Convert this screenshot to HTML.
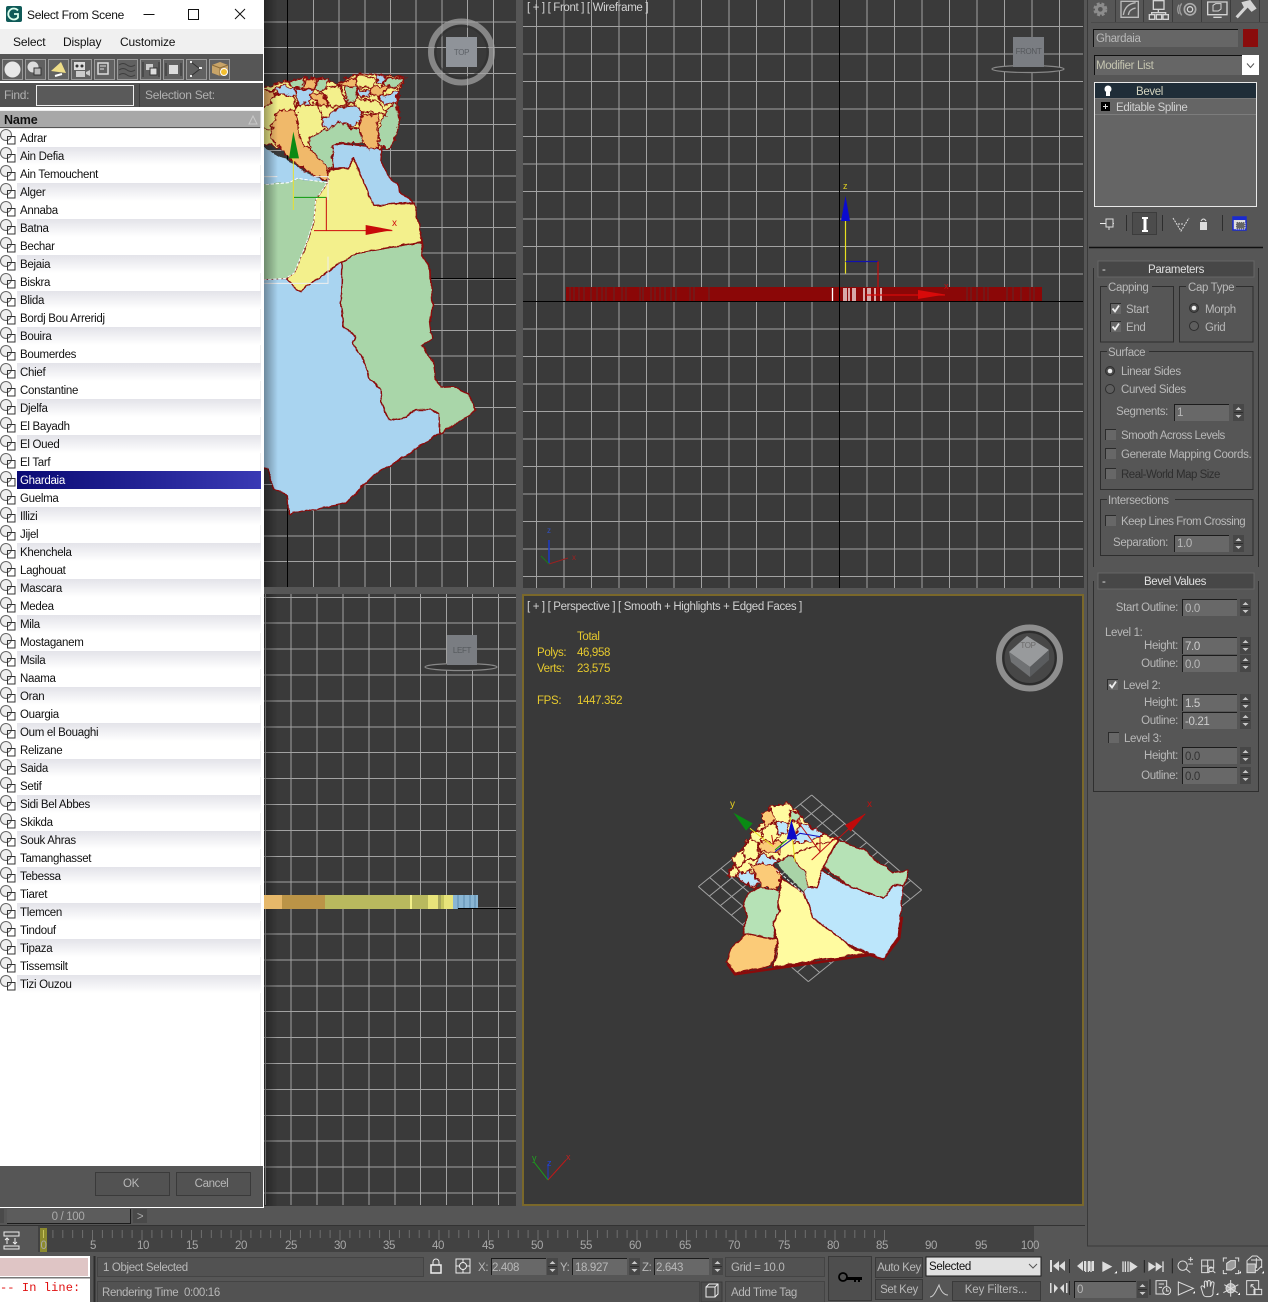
<!DOCTYPE html>
<html lang="en"><head><meta charset="utf-8"><title>Select From Scene</title>
<style>
html,body{margin:0;padding:0;width:1268px;height:1302px;overflow:hidden;background:#565656}
#m{position:absolute;left:0;top:0;font-family:"Liberation Sans",sans-serif;font-size:11.5px;letter-spacing:-.35px}
#m text{fill:#b8b8b8}
#m .d{fill:#d2d2d2}
#m .y{fill:#e6c92e}
#m .k{fill:#111}
#m .w{font-size:12px;letter-spacing:-.15px}
#m .t{font-size:12px;letter-spacing:-.3px}
#m .q{letter-spacing:-.5px}
#m .h{fill:#e0e0e0;text-anchor:middle}
#m .c{text-anchor:middle}
#m .n{fill:#a8a8a8;text-anchor:middle}
#m .e{text-anchor:end}
#m .g{fill:none;stroke:#a2a2a2;stroke-width:1;shape-rendering:crispEdges}
#m .map polygon{stroke:#8b0a0a;stroke-width:4;stroke-linejoin:round}
.b{fill:#a9d4f0}.v{fill:#a9d6a9}.l{fill:#f3f08c}.o{fill:#f0b96a}
#list{position:absolute;left:0;top:129px;width:261px;font:11.5px/20px "Liberation Sans",sans-serif;letter-spacing:-.3px;color:#111}
#list div{height:18px;padding-left:20px;position:relative;white-space:nowrap}
#list div:nth-child(even){background:linear-gradient(#e3e3e9,#fff) 17px 0/244px 18px no-repeat}
#list svg{position:absolute;left:0;top:0;width:17px;height:18px}
#list .s{background:linear-gradient(90deg,#07076f,#3a3ab4)!important;color:#fff}
#list .s svg{background:#fff}
</style></head><body>
<svg id="m" width="1268" height="1302" viewBox="0 0 1268 1302" xmlns="http://www.w3.org/2000/svg">
<defs>
<linearGradient id="shade" x1="0" x2="1" y1="0" y2="0"><stop offset="0" stop-color="#000" stop-opacity=".35"/><stop offset="1" stop-color="#000" stop-opacity="0"/></linearGradient>
<clipPath id="tl"><rect x="264" y="0" width="252" height="587"/></clipPath>
<filter id="j1" x="-5%" y="-5%" width="110%" height="110%"><feTurbulence type="fractalNoise" baseFrequency=".035" numOctaves="3" seed="4"/><feDisplacementMap in="SourceGraphic" scale="12" xChannelSelector="R" yChannelSelector="G"/></filter>
<filter id="j2" x="-8%" y="-8%" width="116%" height="116%"><feTurbulence type="fractalNoise" baseFrequency=".07" numOctaves="3" seed="9"/><feDisplacementMap in="SourceGraphic" scale="20" xChannelSelector="R" yChannelSelector="G"/></filter>
<symbol id="fd" width="56" height="18" overflow="visible"><rect width="55" height="17" fill="#686868"/><path d="M.5 17V.5H55" fill="none" stroke="#1c1c1c"/></symbol>
<symbol id="sp" width="12" height="18" overflow="visible"><rect width="11" height="17" fill="#474747"/><path d="M5.5 3l3 3h-6zM5.5 14l3-3h-6z" fill="#c8c8c8"/><path d="M1 8.5h9" stroke="#2e2e2e"/></symbol>
<symbol id="cb" width="13" height="13" overflow="visible"><rect width="11" height="11" fill="#676767"/><path d="M.5 11V.5H11" fill="none" stroke="#2b2b2b"/></symbol>
<symbol id="cc" width="13" height="13" overflow="visible"><rect width="11" height="11" fill="#676767"/><path d="M.5 11V.5H11" fill="none" stroke="#2b2b2b"/><path d="M2.5 5.5l2.5 3 4-6" fill="none" stroke="#eee" stroke-width="1.8"/></symbol>
<symbol id="ro" width="12" height="12" overflow="visible"><circle cx="5" cy="5" r="4.5" fill="#4a4a4a" stroke="#2e2e2e"/><circle cx="5" cy="5" r="2.3" fill="#eee"/></symbol>
<symbol id="rf" width="12" height="12" overflow="visible"><circle cx="5" cy="5" r="4.5" fill="#5e5e5e" stroke="#2e2e2e"/></symbol>
<symbol id="tb" width="22" height="22" overflow="visible"><rect x=".5" y=".5" width="20" height="20" fill="#616161" stroke="#9a9a9a"/></symbol>
<symbol id="li" width="17" height="18" overflow="visible"><circle cx="6" cy="6" r="5.5" fill="#eee" stroke="#666"/><rect x="7.500" y="7.500" width="7.500" height="7.500" fill="none" stroke="#333"/></symbol>
</defs>

<!-- viewports -->
<rect x="264" y="0" width="252" height="587" fill="#3a3a3a"/>
<rect x="523" y="0" width="561" height="588" fill="#3a3a3a"/>
<rect x="264" y="594" width="252" height="612" fill="#3a3a3a"/>
<rect x="523" y="595" width="560" height="610" fill="#393939" stroke="#7a682a" stroke-width="2"/>

<!-- top-left grid -->
<path class="g" d="M313.4 0v587m25.7-587v587m25.7-587v587m25.7-587v587m25.7-587v587m25.7-587v587m25.7-587v587m25.7-587v587"/>
<path class="g" d="M264 21.9h252m-252 25.7h252m-252 25.7h252m-252 25.7h252m-252 25.7h252m-252 25.7h252m-252 25.7h252m-252 25.7h252m-252 25.7h252m-252 25.7h252m-252 25.7h252m-252 25.7h252m-252 25.7h252m-252 25.7h252m-252 25.7h252m-252 25.7h252m-252 25.7h252m-252 25.7h252m-252 25.7h252m-252 25.7h252m-252 25.7h252m-252 25.7h252"/>
<path d="M287.5 0v587M264 278.5h252" stroke="#000" fill="none"/>

<!-- top-left map -->
<g clip-path="url(#tl)"><g class="map" transform="translate(264 60) scale(.33333)">
<g filter="url(#j1)">
<polygon class="b" points="-30,660 65,655 108,695 235,605 232,735 238,800 272,830 265,850 290,885 320,960 350,985 352,1030 375,1080 425,1070 455,1050 500,1050 527,1062 527,1122 380,1215 330,1245 243,1332 75,1362 72,1305 30,1290 10,1230 -30,1205"/>
<polygon class="v" points="235,605 280,580 475,545 472,580 500,630 505,740 498,790 505,835 475,855 510,915 515,960 535,982 565,980 612,1002 636,1050 527,1122 527,1062 500,1050 455,1050 425,1070 375,1080 352,1030 350,985 320,960 290,885 265,850 272,830 238,800 232,735"/>
<polygon class="b" points="205,250 270,255 330,260 355,270 352,300 370,345 400,370 405,395 450,428 330,435 300,375 268,290 255,325 208,325"/>
<polygon class="l" points="190,330 255,325 268,290 300,375 330,435 450,428 475,545 280,580 235,605 108,695 65,655 90,640 125,555 150,480 155,420 190,370"/>
<polygon class="b" points="-30,240 30,280 70,300 120,335 190,368 100,355 75,368 -30,375" style="stroke:none"/>
<polygon points="-30,375 75,368 100,355 190,368 155,420 150,480 125,555 90,640 65,655 -30,660" fill="#a9d3a7" style="stroke:none"/>
</g>
<g filter="url(#j2)">
<polygon class="l" points="-30,90 50,68 110,55 165,55 220,72 275,42 340,45 425,52 405,90 400,125 408,185 392,240 375,265 345,262 300,250 205,250 205,325 190,330 140,290 50,265 -30,240"/>
<polygon class="o" points="20,210 45,150 95,150 105,215 115,250 140,270 190,320 190,365 130,335 75,295 50,265 25,240"/>
<polygon class="l" points="95,150 100,135 165,130 190,205 135,235 140,270 115,250 105,215"/>
<polygon class="v" points="135,235 190,205 230,185 260,205 285,205 300,250 205,250 205,325 190,320 140,270"/>
<polygon class="b" points="175,180 220,145 270,135 300,155 290,185 260,200 230,185 195,205 180,200"/>
<polygon class="o" points="290,170 345,160 340,205 345,255 318,270 300,250 285,205"/>
<polygon class="v" points="345,205 365,155 395,125 408,185 392,240 375,265 345,255"/>
<polygon class="l" points="-30,135 40,100 90,108 95,150 45,150 20,210 -30,195"/>
<polygon class="o" points="-30,92 30,92 22,132 -30,155"/>
<polygon class="b" points="30,92 50,75 95,85 90,108 40,100"/>
<polygon class="v" points="75,65 125,52 112,85 90,85"/>
<polygon class="o" points="125,58 160,55 150,88 112,85"/>
<polygon class="v" points="165,55 195,60 180,95 150,90"/>
<polygon class="b" points="95,85 150,92 135,130 100,135"/>
<polygon class="o" points="135,105 175,100 200,140 165,135"/>
<polygon class="l" points="175,90 225,75 250,135 205,155 200,140"/>
<polygon class="o" points="225,68 275,55 280,85 235,80"/>
<polygon class="v" points="240,80 275,80 280,125 250,130"/>
<polygon class="l" points="275,45 340,55 325,85 280,80"/>
<polygon class="b" points="280,85 320,95 310,112 280,105"/>
<polygon class="b" points="340,45 365,48 355,72 342,70"/>
<polygon class="v" points="365,55 420,55 400,85 355,80"/>
<polygon class="o" points="325,80 375,78 345,115 318,100"/>
<polygon class="b" points="345,115 405,90 395,125 365,135"/>
<polygon class="l" points="280,115 345,125 370,165 345,160 300,155 270,135"/>
<polygon class="l" points="200,140 250,135 270,135 220,145 175,180 165,135"/>
</g>
<polyline points="-10,375 75,368 100,355 190,368 155,420 150,480 125,555 90,640 65,655 -10,660" fill="none" stroke="#fff" stroke-width="3" stroke-dasharray="10 5"/>
<path d="M-10 350h50M150 350h42v70M192 590v80H-10" fill="none" stroke="#eee" stroke-width="3"/>
<path d="M88 220V450" stroke="#e8e030" stroke-width="3"/>
<path d="M90 412H187" fill="none" stroke="#0a9a0a" stroke-width="3"/>
<path d="M187 412V512" stroke="#c80a0a" stroke-width="3"/>
<path d="M150 512H385" stroke="#d00a0a" stroke-width="3"/>
<path d="M305 495V525L385 510Z" fill="#c80a0a"/>
<path d="M88 215L75 295H105Z" fill="#0a8a14"/>
</g></g>
<rect x="264" y="0" width="14" height="587" fill="url(#shade)"/>
<text x="392" y="226" style="fill:#d01010;font-size:10px">x</text>
<!-- viewcube top -->
<circle cx="461.500" cy="52" r="30.500" fill="none" stroke="#a4a4a4" stroke-width="6" opacity=".72"/>
<circle cx="461.500" cy="52" r="26" fill="none" stroke="#2e2e2e" stroke-width="2" opacity=".55"/>
<rect x="446" y="37" width="31" height="30" fill="#8f9399"/>
<text x="461.500" y="55" class="c" style="fill:#5e6268;font-size:8px">TOP</text>

<!-- front grid -->
<path class="g" d="M536.4 0v588m27.54-588v588m27.54-588v588m27.54-588v588m27.54-588v588m27.54-588v588m27.54-588v588m27.54-588v588m27.54-588v588m27.54-588v588m27.54-588v588m27.54-588v588m27.54-588v588m27.54-588v588m27.54-588v588m27.54-588v588m27.54-588v588m27.54-588v588m27.54-588v588m27.54-588v588"/>
<path class="g" d="M523 26.3h560m-560 27.5h560m-560 27.5h560m-560 27.5h560m-560 27.5h560m-560 27.5h560m-560 27.5h560m-560 27.5h560m-560 27.5h560m-560 27.5h560m-560 27.5h560m-560 27.5h560m-560 27.5h560m-560 27.5h560m-560 27.5h560m-560 27.5h560m-560 27.5h560m-560 27.5h560m-560 27.5h560m-560 27.5h560m-560 27.5h560"/>
<rect x="566" y="287" width="476" height="15" fill="#8b0707"/>
<path d="M570 287v15M574 287v15M579 287v15M584 287v15M591 287v15M597 287v15M602 287v15M606 287v15M614 287v15M622 287v15M626 287v15M640 287v15M643 287v15M651 287v15M655 287v15M660 287v15M665 287v15M671 287v15M676 287v15M690 287v15M694 287v15M709 287v15M967 287v15M971 287v15M977 287v15M984 287v15M988 287v15M1007 287v15M1013 287v15M1021 287v15M1030 287v15M1034 287v15" stroke="#5f2a2a"/>
<path d="M832.500 288v14M844 288v14M846 288v14M849 288v14M853 288v14M855 288v14M864 288v14M868 288v14M870 288v14M875 288v14M881 288v14" stroke="#fff" stroke-width="1.300"/>
<path d="M523 301.500h560M839.500 0v588" stroke="#000" fill="none"/>
<path d="M845.500 220V273.500" stroke="#e8e020" stroke-width="1.200"/>
<path d="M845.500 261.500H878" stroke="#1010b0" stroke-width="1.200"/>
<path d="M878 261.500V295" stroke="#c80a0a" stroke-width="1.200"/>
<path d="M866 295H945" stroke="#d80a0a" stroke-width="1.200"/>
<path d="M918 290V299L945 294.500Z" fill="#d80a0a"/>
<path d="M845.500 196L841 221H850Z" fill="#0a0ad0"/>
<text x="843" y="189" style="fill:#e0d020;font-size:9px">z</text>
<text x="944" y="289" style="fill:#c01010;font-size:9px">x</text>
<text x="527" y="11" class="d">[ + ] [ Front ] [ Wireframe ]</text>
<!-- front cube -->
<ellipse cx="1028" cy="69" rx="36" ry="3.500" fill="#333" stroke="#888" stroke-width="1.200"/>
<rect x="1013" y="37" width="31" height="30" fill="#7a7d82"/>
<text x="1028.500" y="54" class="c" style="fill:#55585c;font-size:8px">FRONT</text>
<!-- front tripod -->
<path d="M549 564V540" stroke="#1a3ac8" stroke-width="1.500"/><path d="M549 564L568 558" stroke="#9a2020"/><path d="M549 564L541 556" stroke="#1a7a1a"/>
<text x="547" y="533" style="fill:#3050c0;font-size:8px">z</text><text x="572" y="560" style="fill:#a02020;font-size:8px">x</text>

<!-- left grid -->
<path class="g" d="M265.300 594v611m25.9-611v611m25.9-611v611m25.9-611v611m25.9-611v611m25.9-611v611m25.9-611v611m25.9-611v611m25.9-611v611m25.9-611v611"/>
<path class="g" d="M264 597.300h252m-252 25.9h252m-252 25.9h252m-252 25.9h252m-252 25.9h252m-252 25.9h252m-252 25.9h252m-252 25.9h252m-252 25.9h252m-252 25.9h252m-252 25.9h252m-252 25.9h252m-252 25.9h252m-252 25.9h252m-252 25.9h252m-252 25.9h252m-252 25.9h252m-252 25.9h252m-252 25.9h252m-252 25.9h252m-252 25.9h252m-252 25.9h252m-252 25.9h252m-252 25.9h252"/>
<rect x="264" y="594" width="14" height="612" fill="url(#shade)"/>
<ellipse cx="461" cy="667" rx="36" ry="3.500" fill="#333" stroke="#888" stroke-width="1.200"/>
<rect x="447" y="635" width="30" height="30" fill="#7a7d82"/>
<text x="462" y="653" class="c" style="fill:#55585c;font-size:8px">LEFT</text>
<rect x="264" y="895" width="18" height="14" fill="#e6b86a"/><rect x="282" y="895" width="43" height="14" fill="#bb9447"/><rect x="325" y="895" width="85" height="14" fill="#b9b95e"/><rect x="410" y="895" width="2" height="14" fill="#f3f08a"/><rect x="412" y="895" width="16" height="14" fill="#b9b95e"/><rect x="428" y="895" width="10" height="14" fill="#e8e47a"/><rect x="438" y="895" width="3" height="14" fill="#a8a85c"/><rect x="441" y="895" width="3" height="14" fill="#c8c860"/><rect x="444" y="895" width="9" height="14" fill="#e8e47a"/><rect x="453" y="895" width="25" height="14" fill="#8ab6d4"/>
<path d="M458 895v14M464 895v14M470 895v14M475 895v14" stroke="#5c8cb0"/>
<path d="M458 908.500h58" stroke="#000"/>

<!-- perspective -->
<text x="527" y="610" class="d">[ + ] [ Perspective ] [ Smooth + Highlights + Edged Faces ]</text>
<text x="577" y="640" class="y">Total</text>
<text x="537" y="656" class="y">Polys:</text><text x="577" y="656" class="y">46,958</text>
<text x="537" y="672" class="y">Verts:</text><text x="577" y="672" class="y">23,575</text>
<text x="537" y="704" class="y">FPS:</text><text x="577" y="704" class="y">1447.352</text>
<circle cx="1029.500" cy="658" r="30.500" fill="none" stroke="#8e8e8e" stroke-width="6"/>
<circle cx="1029.500" cy="658" r="26" fill="#474747" stroke="#2c2c2c" stroke-width="2"/>
<path d="M1027 636L1049 650L1030 667L1009 652Z" fill="#989a9c"/>
<path d="M1009 652L1030 667V677L1011 662Z" fill="#707274"/><path d="M1030 667L1049 650V660L1030 677Z" fill="#5a5c5e"/>
<text x="1028" y="648" class="c" style="fill:#6c6c6c;font-size:8px">TOP</text>
<path d="M548 1180V1164" stroke="#1a3ac8"/><path d="M548 1180L566 1160" stroke="#c01818"/><path d="M548 1180L534 1162" stroke="#18a018"/>
<text x="532" y="1161" style="fill:#20a020;font-size:9px">y</text><text x="547" y="1166" style="fill:#2040e0;font-size:9px">z</text><text x="566" y="1160" style="fill:#c02020;font-size:9px">x</text>

<g class="map" transform="translate(690 790) scale(.33333)">
<path d="M0 0V10M1 0V10M2 0V10M3 0V10M4 0V10M5 0V10M6 0V10M7 0V10M8 0V10M9 0V10M10 0V10M0 0H10M0 1H10M0 2H10M0 3H10M0 4H10M0 5H10M0 6H10M0 7H10M0 8H10M0 9H10M0 10H10" transform="matrix(33 28.5 -34 27.5 365 15)" fill="none" stroke="#a2a2a2" stroke-width="1" vector-effect="non-scaling-stroke"/>
<polyline points="112,522 135,553 540,495 580,508 628,445 636,380" fill="none" stroke="#8b0a0a" stroke-width="7"/>
<g filter="url(#j1)">
<polygon points="110,515 125,475 170,430 265,450 245,525 135,550" fill="#fbcb78"/>
<polygon points="160,430 170,370 160,350 175,310 215,290 270,300 265,350 270,365 250,395 255,445" fill="#b6e2b6"/>
<polygon points="275,265 340,310 375,385 410,400 480,470 530,490 250,530 265,470 250,400 270,360 265,335" fill="#fffba0"/>
<polygon points="340,305 395,235 420,260 480,290 580,325 610,285 640,285 625,440 580,505 540,490 480,465 370,385" fill="#bce6fb"/>
<polygon points="400,230 445,150 520,180 610,250 655,240 645,285 610,285 580,325 480,290" fill="#b6e2b6"/>
<polygon points="300,190 340,160 445,145 400,230 380,290 355,290 345,250" fill="#fffba0"/>
<polygon points="260,220 300,195 345,250 355,290 340,305" fill="#a9d3a7" style="stroke:none"/>
</g>
<g filter="url(#j2)">
<polygon points="110,255 125,235 145,190 185,140 215,100 245,55 295,38 330,80 380,130 445,145 310,190 260,220 180,225 210,280 190,295 150,265" fill="#fffba0"/>
<polygon points="180,225 240,218 275,255 260,300 215,290" fill="#fbcb78"/>
<polygon points="330,100 405,130 360,155 310,160" fill="#bce6fb"/>
<polygon points="210,190 270,210 250,225 200,220" fill="#bce6fb"/>
<polygon points="205,150 275,155 270,190 210,185" fill="#fbcb78"/>
<polygon points="150,250 180,240 210,280 180,290 145,265" fill="#bce6fb"/>
<polygon points="240,50 295,40 325,70 300,100 250,110" fill="#fffba0"/>
<polygon points="300,60 330,75 325,100 300,90" fill="#b6e2b6"/>
<polygon points="215,115 250,100 280,130 245,160 215,150" fill="#fffba0"/>
<polygon points="255,95 295,95 290,135 265,130" fill="#bce6fb"/>
<polygon points="185,125 215,120 215,160 180,165" fill="#fffba0"/>
<polygon points="160,170 180,145 205,160 205,205 165,210" fill="#fffba0"/>
<polygon points="125,205 160,175 165,215 140,240" fill="#fffba0"/>
<polygon points="115,250 135,225 150,245 130,265" fill="#fffba0"/>
<polygon points="215,70 245,55 255,90 225,115" fill="#fbcb78"/>
</g>
<path d="M320 90L390 185M365 210L440 140M390 140L390 185M245 135L250 165" stroke="#c01010" fill="none" stroke-width="3"/>
<path d="M255 185L330 130L390 140" stroke="#1010c0" fill="none" stroke-width="3"/>
<path d="M300 80L315 215M180 115L250 170" stroke="#e8e020" fill="none" stroke-width="3"/>
<path d="M255 180L290 150" stroke="#10a010" fill="none" stroke-width="3"/>
<path d="M445 145L525 72L470 122" stroke="#c01010" fill="none" stroke-width="3"/>
<path d="M528 70L465 105L482 125Z" fill="#c00a0a"/>
<path d="M130 68L168 122L188 100Z" fill="#0a8a14"/>
<path d="M304 90L290 148H322Z" fill="#0a0ac8"/>
<path d="M260 240L345 315" stroke="#eee" stroke-width="3" stroke-dasharray="9 5"/>
</g>
<text x="730" y="807" style="fill:#e6d020;font-size:10px">y</text>
<text x="867" y="807" style="fill:#c01010;font-size:10px">x</text>

<!-- dialog chrome -->
<rect x="0" y="0" width="264" height="1208" fill="#fff"/>
<rect x="0" y="29" width="263" height="25" fill="#f0f0f0"/>
<rect x="0" y="54" width="263" height="27" fill="#565656"/>
<rect x="0" y="83" width="263" height="24" fill="#525252"/>
<rect x="6" y="6" width="16" height="16" rx="2" fill="#0f5a58"/><path d="M18 10.500A5.500 5.500 0 1 0 18 17.500V14H14" fill="none" stroke="#dfe" stroke-width="1.800"/>
<text x="27" y="19" class="k t">Select From Scene</text>
<path d="M143.500 14.500h11M188.500 9.500h10v10h-10zM235 9l10 10M245 9l-10 10" stroke="#111" fill="none"/>
<text x="13" y="46" class="k w">Select</text><text x="63" y="46" class="k w">Display</text><text x="120" y="46" class="k w">Customize</text>

<use href="#tb" x="2" y="59"/><use href="#tb" x="25" y="59"/><use href="#tb" x="48" y="59"/><use href="#tb" x="71" y="59"/><use href="#tb" x="94" y="59"/><use href="#tb" x="117" y="59"/><use href="#tb" x="140" y="59"/><use href="#tb" x="163" y="59"/><use href="#tb" x="186" y="59"/><use href="#tb" x="209" y="59"/>
<circle cx="12.500" cy="69.500" r="8" fill="#e8e8e8"/>
<circle cx="33" cy="67" r="5.500" fill="#ddd"/><rect x="34" y="68" width="7" height="7" fill="#bbb" stroke="#333"/>
<path d="M51 71L61 62L66 73Z" fill="#eedd88"/><path d="M55 76l7-2" stroke="#fff" stroke-width="2"/>
<rect x="74" y="62" width="11" height="8" fill="#ddd"/><circle cx="77" cy="66" r="1.500" fill="#333"/><circle cx="82" cy="66" r="1.500" fill="#333"/><rect x="76" y="71" width="9" height="6" fill="#ccc"/><path d="M86 72l4-2v6l-4-2z" fill="#ccc"/>
<rect x="98" y="63" width="10" height="11" fill="none" stroke="#ddd" stroke-width="1.500"/><path d="M100 66h6M100 69h4" stroke="#ddd"/>
<path d="M119 65q4-3 8 0t8 0M119 70q4-3 8 0t8 0M119 75q4-3 8 0t8 0" fill="none" stroke="#3e3e3e"/>
<rect x="146" y="64" width="7" height="6" fill="#ccc"/><rect x="150" y="68" width="7" height="7" fill="#ddd" stroke="#333"/><path d="M143 62v15M159 62v15" stroke="#333"/>
<rect x="169" y="65" width="9" height="9" fill="#ddd"/><path d="M166 63v13M181 63v13" stroke="#333"/>
<path d="M191 62l9 7-9 7" fill="none" stroke="#333"/><path d="M190 62h2M199 68h3M190 76h2" stroke="#eee" stroke-width="2"/>
<path d="M212 65l8-3 8 3v8l-8 3-8-3z" fill="#c8a468"/><path d="M212 65l8 3 8-3M220 68v8" fill="none" stroke="#8a6a38"/><circle cx="224" cy="72" r="3.500" fill="#f4c030" stroke="#fff"/>

<text x="4" y="99" class="t" style="fill:#b0b0b0">Find:</text>
<rect x="36.500" y="85.500" width="97" height="20" fill="#5a5a5a" stroke="#eee"/>
<path d="M139.500 84v23" stroke="#3c3c3c"/>
<text x="145" y="99" class="t" style="fill:#b0b0b0">Selection Set:</text>
<rect x="0" y="110" width="261" height="18" fill="#a8a8a8"/>
<path d="M0 110.500H261M261 110V128M0 128.500H261" stroke="#eee" fill="none"/><path d="M0 127.500H260" stroke="#555"/>
<text x="4" y="124" class="k" style="font-weight:700;font-size:12.500px;letter-spacing:-.1px">Name</text>
<path d="M253 116l-4 8h8z" fill="none" stroke="#c8c8c8"/>
<!-- dialog bottom -->
<rect x="0" y="1166" width="263" height="41" fill="#565656"/>
<path d="M260.500 128V1166" stroke="#eee"/>
<rect x="95.500" y="1172.500" width="74" height="23" fill="#525252" stroke="#3a3a3a"/>
<rect x="176.500" y="1172.500" width="74" height="23" fill="#525252" stroke="#3a3a3a"/>
<text x="131" y="1187" class="c">OK</text><text x="211.500" y="1187" class="c">Cancel</text>

<!-- command panel -->
<path d="M1087.500 0V1246H1268" fill="none" stroke="#3a3a3a"/>
<path d="M1115.500 0v22M1143.500 0v22M1172.500 0v22M1201.500 0v22M1230.500 0v22M1259.500 0v22" stroke="#3c3c3c"/>
<g transform="translate(1085 0) scale(.33333)" fill="none" stroke="#d4d4d4" stroke-width="4">
<circle cx="46" cy="28" r="16" fill="#8c8c8c" stroke="#8c8c8c" stroke-width="10" stroke-dasharray="8 5"/><circle cx="46" cy="28" r="7" fill="#565656" stroke="none"/>
<path d="M108 52V4H160V52ZM115 45Q120 12 152 8M130 45Q132 28 152 24" stroke="#bbb"/>
<rect x="205" y="2" width="32" height="26"/><rect x="193" y="44" width="16" height="14"/><rect x="214" y="44" width="16" height="14"/><rect x="234" y="44" width="16" height="14"/><path d="M220 28V38M200 44V38H242V44" />
<circle cx="315" cy="28" r="8"/><circle cx="315" cy="28" r="17" stroke-width="5" stroke="#aaa"/><path d="M290 10Q278 28 290 46M282 14Q274 28 282 42" stroke="#999"/>
<path d="M368 6H426V44H368ZM385 52H410" /><path d="M384 16l8-5h16v16l-8 6h-16z" stroke-width="3"/>
<path d="M455 52L490 14" stroke-width="9"/><path d="M472 8L495 2L512 25L500 33L488 20L478 20Z" fill="#d4d4d4"/>
</g>
<path d="M1091 22.500H1268" stroke="#4a4a4a"/>
<rect x="1093" y="29" width="145" height="18" fill="#666"/><path d="M1093.500 47V29.500H1238" fill="none" stroke="#111"/>
<text x="1096" y="42">Ghardaia</text>
<rect x="1243" y="29" width="15" height="18" fill="#8a0c0c"/>
<rect x="1094" y="55" width="149" height="20" fill="#666"/><path d="M1094.500 75V55.500H1259" fill="none" stroke="#111"/>
<text x="1096" y="69" style="fill:#c4c4b0">Modifier List</text>
<rect x="1242" y="55" width="17" height="20" fill="#fff"/><path d="M1247 63.500l3.500 4 3.500-4" fill="none" stroke="#555"/>
<rect x="1094.500" y="82.500" width="162" height="124" fill="#656565" stroke="#e8e8e8"/>
<rect x="1095" y="83" width="161" height="15" fill="#1f2d38"/>
<path d="M1095 114.500H1256" stroke="#7c7c7c"/><path d="M1095 98.500H1256" stroke="#777"/>
<circle cx="1108" cy="89" r="3.500" fill="#fff"/><rect x="1106" y="92" width="4" height="4" fill="#fff"/>
<text x="1136" y="95" style="fill:#d4d4c0">Bevel</text>
<rect x="1101" y="102" width="9" height="9" fill="#000"/><path d="M1103 106.500h5M1105.500 104v5" stroke="#ddd"/>
<text x="1116" y="111" style="fill:#d0d0d0">Editable Spline</text>
<path d="M1100 223.500h6" stroke="#eee"/><rect x="1106" y="219" width="7" height="8" fill="none" stroke="#ddd"/><path d="M1113 223.500h1M1109 227v3" stroke="#ddd"/>
<path d="M1126.500 215v16M1162.500 215v16M1222.500 215v16" stroke="#2e2e2e"/>
<rect x="1132.500" y="212.500" width="24" height="22" fill="#4c4c4c" stroke="#3c3c3c"/>
<path d="M1142 217h6v2h-1.500v11h1.500v2h-6v-2h1.500v-11h-1.500z" fill="#fff"/>
<path d="M1173 218l8 13 8-13M1178 224h6" fill="none" stroke="#ddd" stroke-dasharray="2 1"/>
<path d="M1200 222h7v8h-7z" fill="#ddd"/><path d="M1201 221q2.500-4 5 0" fill="none" stroke="#ddd"/>
<rect x="1233" y="217" width="13" height="13" fill="#ddd" stroke="#1a2ad0" stroke-width="1.500"/><rect x="1233" y="217" width="13" height="3" fill="#1a2ad0"/><path d="M1236 222h9v7h-9z" fill="#666" stroke="#eee" stroke-dasharray="1 1"/>
<path d="M1089 247.500H1263" stroke="#111" stroke-width="1.500"/>
<path d="M1093.500 268V567M1258.500 268V567" stroke="#2f2f2f" fill="none"/>
<rect x="1098" y="261" width="156" height="16" fill="#474747" stroke="#666"/>
<text x="1102" y="273" style="fill:#ddd">-</text><text x="1176" y="273" class="h">Parameters</text>
<g fill="none" stroke="#2e2e2e">
<rect x="1100.500" y="286.500" width="73" height="55.500"/><rect x="1179.500" y="286.500" width="73.500" height="55.500"/>
<rect x="1100.500" y="351.500" width="152.500" height="138"/><rect x="1100.500" y="499.500" width="152.500" height="56"/>
</g>
<rect x="1107" y="282" width="45" height="10" fill="#565656"/><rect x="1186" y="282" width="50" height="10" fill="#565656"/><rect x="1107" y="347" width="42" height="10" fill="#565656"/><rect x="1107" y="495" width="68" height="10" fill="#565656"/>
<text x="1108" y="291">Capping</text><text x="1188" y="291">Cap Type</text><text x="1108" y="356">Surface</text><text x="1108" y="504">Intersections</text>
<use href="#cc" x="1110" y="303"/><use href="#cc" x="1110" y="321"/><text x="1126" y="313">Start</text><text x="1126" y="331">End</text>
<use href="#ro" x="1189" y="303"/><use href="#rf" x="1189" y="321"/><text x="1205" y="313">Morph</text><text x="1205" y="331">Grid</text>
<use href="#ro" x="1105" y="366"/><use href="#rf" x="1105" y="384"/><text x="1121" y="375">Linear Sides</text><text x="1121" y="393">Curved Sides</text>
<text x="1168" y="415" class="e">Segments:</text><use href="#fd" x="1174" y="404"/><text x="1177" y="416">1</text><use href="#sp" x="1233" y="404"/>
<use href="#cb" x="1105" y="429"/><text x="1121" y="439" class="q">Smooth Across Levels</text>
<use href="#cb" x="1105" y="448"/><text x="1121" y="458">Generate Mapping Coords.</text>
<use href="#cb" x="1105" y="468"/><text x="1121" y="478" class="q" style="fill:#2e2e2e">Real-World Map Size</text>
<use href="#cb" x="1105" y="515"/><text x="1121" y="525" class="q">Keep Lines From Crossing</text>
<text x="1168" y="546" class="e">Separation:</text><use href="#fd" x="1174" y="535"/><text x="1177" y="547">1.0</text><use href="#sp" x="1233" y="535"/>

<path d="M1093.500 581V791.500H1258.500V581" stroke="#2f2f2f" fill="none"/>
<rect x="1098" y="573" width="156" height="16" fill="#474747" stroke="#666"/>
<text x="1102" y="585" style="fill:#ddd">-</text><text x="1175" y="585" class="h">Bevel Values</text>
<text x="1178" y="611" class="e">Start Outline:</text><use href="#fd" x="1182" y="599"/><text x="1185" y="612">0.0</text><use href="#sp" x="1240" y="599"/>
<text x="1105" y="636">Level 1:</text>
<text x="1178" y="649" class="e">Height:</text><use href="#fd" x="1182" y="637"/><text x="1185" y="650" style="fill:#ccc">7.0</text><use href="#sp" x="1240" y="637"/>
<text x="1178" y="667" class="e">Outline:</text><use href="#fd" x="1182" y="655"/><text x="1185" y="668">0.0</text><use href="#sp" x="1240" y="655"/>
<use href="#cc" x="1107" y="679"/><text x="1123" y="689">Level 2:</text>
<text x="1178" y="706" class="e">Height:</text><use href="#fd" x="1182" y="694"/><text x="1185" y="707" style="fill:#ccc">1.5</text><use href="#sp" x="1240" y="694"/>
<text x="1178" y="724" class="e">Outline:</text><use href="#fd" x="1182" y="712"/><text x="1185" y="725" style="fill:#ccc">-0.21</text><use href="#sp" x="1240" y="712"/>
<use href="#cb" x="1108" y="732"/><text x="1124" y="742">Level 3:</text>
<text x="1178" y="759" class="e">Height:</text><use href="#fd" x="1182" y="747"/><text x="1185" y="760" style="fill:#333">0.0</text><use href="#sp" x="1240" y="747"/>
<text x="1178" y="779" class="e">Outline:</text><use href="#fd" x="1182" y="767"/><text x="1185" y="780" style="fill:#333">0.0</text><use href="#sp" x="1240" y="767"/>

<!-- time slider -->
<rect x="0" y="1209" width="4" height="14" fill="#4a4a4a"/>
<rect x="7" y="1209" width="123" height="14" fill="#5c5c5c"/><path d="M7 1223.500H130.500V1209" fill="none" stroke="#1c1c1c"/>
<text x="68" y="1220" class="c" style="fill:#aaa">0 / 100</text>
<rect x="133" y="1209" width="14" height="14" fill="#4a4a4a"/><text x="140" y="1220" class="c" style="fill:#aaa">&gt;</text>
<path d="M0 1225.500H1085" stroke="#333"/>
<rect x="38" y="1226" width="996" height="26" fill="#424242"/>
<path d="M43 1230v8m9.9-8v8m9.9-8v8m9.9-8v8m9.9-8v8m9.9-8v10m9.9-10v8m9.900-8v8m9.900-8v8m9.900-8v8m9.900-8v10m9.900-10v8m9.900-8v8m9.900-8v8m9.900-8v8m9.900-8v10m9.900-10v8m9.900-8v8m9.900-8v8m9.900-8v8m9.900-8v10m9.900-10v8m9.900-8v8m9.900-8v8m9.900-8v8m9.900-8v10m9.900-10v8m9.900-8v8m9.900-8v8m9.900-8v8m9.900-8v10m9.900-10v8m9.900-8v8m9.900-8v8m9.900-8v8m9.900-8v10m9.900-10v8m9.900-8v8m9.900-8v8m9.900-8v8m9.900-8v10m9.900-10v8m9.900-8v8m9.900-8v8m9.900-8v8m9.900-8v10m9.900-10v8m9.900-8v8m9.900-8v8m9.900-8v8m9.900-8v10m9.900-10v8m9.900-8v8m9.900-8v8m9.900-8v8m9.900-8v10m9.900-10v8m9.900-8v8m9.900-8v8m9.900-8v8m9.900-8v10m9.900-10v8m9.900-8v8m9.900-8v8m9.900-8v8m9.900-8v10m9.900-10v8m9.900-8v8m9.900-8v8m9.900-8v8m9.900-8v10m9.900-10v8m9.900-8v8m9.900-8v8m9.900-8v8m9.900-8v10m9.900-10v8m9.900-8v8m9.900-8v8m9.900-8v8m9.900-8v10m9.900-10v8m9.900-8v8m9.900-8v8m9.900-8v8m9.900-8v10" stroke="#6e6e6e" fill="none"/>
<rect x="40" y="1228" width="7" height="24" fill="#8c8a2e"/><path d="M43.500 1230v8" stroke="#c8c460"/>
<text x="43.500" y="1249" class="n">0</text><text x="93" y="1249" class="n">5</text><text x="143" y="1249" class="n">10</text><text x="192" y="1249" class="n">15</text><text x="241" y="1249" class="n">20</text><text x="291" y="1249" class="n">25</text><text x="340" y="1249" class="n">30</text><text x="389" y="1249" class="n">35</text><text x="438" y="1249" class="n">40</text><text x="488" y="1249" class="n">45</text><text x="537" y="1249" class="n">50</text><text x="586" y="1249" class="n">55</text><text x="635" y="1249" class="n">60</text><text x="685" y="1249" class="n">65</text><text x="734" y="1249" class="n">70</text><text x="784" y="1249" class="n">75</text><text x="833" y="1249" class="n">80</text><text x="882" y="1249" class="n">85</text><text x="931" y="1249" class="n">90</text><text x="981" y="1249" class="n">95</text><text x="1030" y="1249" class="n">100</text>
<path d="M4 1232h15v4H4zM4 1246h15v3H4zM7 1244v-6m-2 2l2-2 2 2M15 1238v6m-2-2l2 2 2-2" fill="none" stroke="#eee"/>

<!-- status -->
<rect x="0" y="1256" width="90" height="46" fill="#fff"/>
<rect x="0" y="1258" width="88" height="18" fill="#dfc5c5"/><rect x="0" y="1277" width="90" height="1.500" fill="#777"/>
<path d="M94.500 1256V1302" stroke="#2c2c2c" stroke-width="2"/>
<text x="0" y="1291" style="fill:#e01010;font-family:'Liberation Mono',monospace;font-size:12px;letter-spacing:.1px" xml:space="preserve">-- In line:</text>
<rect x="97.500" y="1257.500" width="326" height="19" fill="#525252" stroke="#444"/>
<text x="103" y="1271">1 Object Selected</text>
<rect x="97.500" y="1281.500" width="602" height="21" fill="#525252" stroke="#444"/>
<text x="102" y="1296">Rendering Time&#160;&#160;0:00:16</text>
<rect x="431" y="1265" width="10" height="8" fill="none" stroke="#eee" stroke-width="1.500"/><path d="M433 1265v-3a3 3 0 0 1 6 0v3" fill="none" stroke="#eee"/>
<rect x="456" y="1259" width="14" height="14" fill="none" stroke="#eee"/><circle cx="463" cy="1266" r="3.500" fill="none" stroke="#eee"/><path d="M463 1259v4M463 1269v4M456 1266h4M466 1266h4" stroke="#eee"/>
<text x="478" y="1271">X:</text><use href="#fd" x="491" y="1258"/><text x="492" y="1271">2.408</text><use href="#sp" x="547" y="1258"/>
<text x="560" y="1271">Y:</text><use href="#fd" x="572" y="1258"/><text x="575" y="1271">18.927</text><use href="#sp" x="629" y="1258"/>
<text x="642" y="1271">Z:</text><use href="#fd" x="654" y="1258"/><text x="656" y="1271">2.643</text><use href="#sp" x="712" y="1258"/>
<rect x="725.500" y="1257.500" width="99" height="19" fill="#525252" stroke="#444"/><text x="731" y="1271">Grid = 10.0</text>
<rect x="701" y="1282" width="21" height="20" fill="#4c4c4c" stroke="#3a3a3a"/>
<path d="M706 1287h9v10h-9zM706 1287l3-3h9v10l-3 3M715 1287l3-3" fill="none" stroke="#eee"/>
<rect x="725.500" y="1281.500" width="99" height="21" fill="#525252" stroke="#444"/><text x="731" y="1296">Add Time Tag</text>
<rect x="828.500" y="1256.500" width="43" height="44" fill="#4e4e4e" stroke="#3a3a3a"/>
<circle cx="843" cy="1277" r="4" fill="none" stroke="#000" stroke-width="1.800"/><path d="M847 1277h15v3h-2v2h-2v-2h-2v2h-2v-2h-7z" fill="#000"/>
<rect x="875.500" y="1257.500" width="47" height="20" fill="#4e4e4e" stroke="#3a3a3a"/><text x="899" y="1271" class="c">Auto Key</text>
<rect x="875.500" y="1279.500" width="47" height="20" fill="#4e4e4e" stroke="#3a3a3a"/><text x="899" y="1293" class="c">Set Key</text>
<rect x="926" y="1257" width="115" height="19" fill="#e2e2e2" stroke="#1c1c1c"/><text x="929" y="1270" class="k">Selected</text><path d="M1029 1264l4 4 4-4" fill="none" stroke="#555"/>
<path d="M930 1297q3 0 6-6t3-6q3 10 9 10" fill="none" stroke="#ccc"/>
<rect x="952.500" y="1281.500" width="88" height="19" fill="#4e4e4e" stroke="#3a3a3a"/><text x="996" y="1293" class="c" style="letter-spacing:-.1px">Key Filters...</text>
<!-- playback -->
<g transform="translate(1085 1250) scale(.33333)" fill="#ddd" stroke="none">
<path d="M52 34L82 50L52 66Z"/><path d="M112 34h4v32h-4zM119 34h4v32h-4zM127 34h4v32h-4zM134 34L158 50L134 66Z"/><path d="M190 36L212 50L190 64ZM212 36L232 50L212 64ZM232 34h4v32h-4z" />
<path d="M0 34h4v32h-4zM8 34h4v32h-4zM16 34h4v32h-4z"/>
<path d="M178 30V68M262 25V70M195 88V135" stroke="#222" stroke-width="3"/>
<g fill="none" stroke="#ddd" stroke-width="3">
<circle cx="293" cy="47" r="14"/><path d="M303 57L316 68M310 28h14M317 21v14M310 42h14"/>
<path d="M350 30h36v24h-14v14h-22zM368 30v38M350 48h22"/><circle cx="378" cy="58" r="7"/><path d="M384 63l7 6"/>
<path d="M415 35V24h11M450 24h11v11M415 60v11h11M450 71h11V60"/><path d="M425 40l12-8h14v20l-12 8h-14z" fill="#999"/>
<path d="M498 30h32v24M514 24v30M530 30l-14-12h-14l-16 14v30h30l14-14" /><rect x="486" y="42" width="25" height="26" fill="#999"/>
<rect x="213" y="92" width="32" height="40"/><circle cx="245" cy="122" r="12" fill="#565656"/><path d="M245 114v9h7M221 102h16M221 112h10" />
<path d="M280 96L325 115L280 135Z"/>
<path d="M348 112c0-8 10-4 11 3l-1-18c0-6 8-5 8 1l1 12 1-14c0-6 8-6 8 0l0 14 3-11c1-6 9-4 8 2l-3 20 0 10c0 5-6 9-12 9h-8c-5 0-8-3-10-8z"/>
<circle cx="437" cy="115" r="14" fill="#aaa"/><path d="M437 90v50M415 128l45-24M418 104l40 24"/>
<path d="M485 92h36v26h-14v16h-22zM510 118v16h20v-16zM498 104l14 14M498 104h8M498 104v8"/>
</g>
<path d="M88 70l8 0 0-7zM323 130l7 0 0-7zM393 135l7 0 0-7zM458 135l7 0 0-7zM461 70l7 0 0-7zM530 70l7 0 0-7z" fill="#fff"/>
</g>
<path d="M1050 1260v12h2v-12zM1053 1266l6-5v10zM1059 1266l6-5v10z" fill="#ddd"/><path d="M1077 1266l6-5v10zM1084 1261h2v10h-2zM1088 1261h2v10h-2zM1092 1261h2v10h-2z" fill="#ddd"/>
<path d="M1069.500 1259v14M1069.500 1281v14" stroke="#2a2a2a"/>
<path d="M1050 1283h1.500v10H1050zM1058 1288l-4-4v9zM1060 1288l4-4v9zM1066 1283h1.500v10H1066z" fill="#ddd"/>
<rect x="1074" y="1281" width="62" height="17" fill="#686868"/><path d="M1074.500 1298v-16.500H1136" fill="none" stroke="#1c1c1c"/><text x="1077" y="1293">0</text><use href="#sp" x="1137" y="1281"/>
</svg>

<div id="list">
<div><svg><use href="#li"/></svg>Adrar</div>
<div><svg><use href="#li"/></svg>Ain Defia</div>
<div><svg><use href="#li"/></svg>Ain Temouchent</div>
<div><svg><use href="#li"/></svg>Alger</div>
<div><svg><use href="#li"/></svg>Annaba</div>
<div><svg><use href="#li"/></svg>Batna</div>
<div><svg><use href="#li"/></svg>Bechar</div>
<div><svg><use href="#li"/></svg>Bejaia</div>
<div><svg><use href="#li"/></svg>Biskra</div>
<div><svg><use href="#li"/></svg>Blida</div>
<div><svg><use href="#li"/></svg>Bordj Bou Arreridj</div>
<div><svg><use href="#li"/></svg>Bouira</div>
<div><svg><use href="#li"/></svg>Boumerdes</div>
<div><svg><use href="#li"/></svg>Chief</div>
<div><svg><use href="#li"/></svg>Constantine</div>
<div><svg><use href="#li"/></svg>Djelfa</div>
<div><svg><use href="#li"/></svg>El Bayadh</div>
<div><svg><use href="#li"/></svg>El Oued</div>
<div><svg><use href="#li"/></svg>El Tarf</div>
<div class="s"><svg><use href="#li"/></svg>Ghardaia</div>
<div><svg><use href="#li"/></svg>Guelma</div>
<div><svg><use href="#li"/></svg>Illizi</div>
<div><svg><use href="#li"/></svg>Jijel</div>
<div><svg><use href="#li"/></svg>Khenchela</div>
<div><svg><use href="#li"/></svg>Laghouat</div>
<div><svg><use href="#li"/></svg>Mascara</div>
<div><svg><use href="#li"/></svg>Medea</div>
<div><svg><use href="#li"/></svg>Mila</div>
<div><svg><use href="#li"/></svg>Mostaganem</div>
<div><svg><use href="#li"/></svg>Msila</div>
<div><svg><use href="#li"/></svg>Naama</div>
<div><svg><use href="#li"/></svg>Oran</div>
<div><svg><use href="#li"/></svg>Ouargia</div>
<div><svg><use href="#li"/></svg>Oum el Bouaghi</div>
<div><svg><use href="#li"/></svg>Relizane</div>
<div><svg><use href="#li"/></svg>Saida</div>
<div><svg><use href="#li"/></svg>Setif</div>
<div><svg><use href="#li"/></svg>Sidi Bel Abbes</div>
<div><svg><use href="#li"/></svg>Skikda</div>
<div><svg><use href="#li"/></svg>Souk Ahras</div>
<div><svg><use href="#li"/></svg>Tamanghasset</div>
<div><svg><use href="#li"/></svg>Tebessa</div>
<div><svg><use href="#li"/></svg>Tiaret</div>
<div><svg><use href="#li"/></svg>Tlemcen</div>
<div><svg><use href="#li"/></svg>Tindouf</div>
<div><svg><use href="#li"/></svg>Tipaza</div>
<div><svg><use href="#li"/></svg>Tissemsilt</div>
<div><svg><use href="#li"/></svg>Tizi Ouzou</div>
</div>
</body></html>
